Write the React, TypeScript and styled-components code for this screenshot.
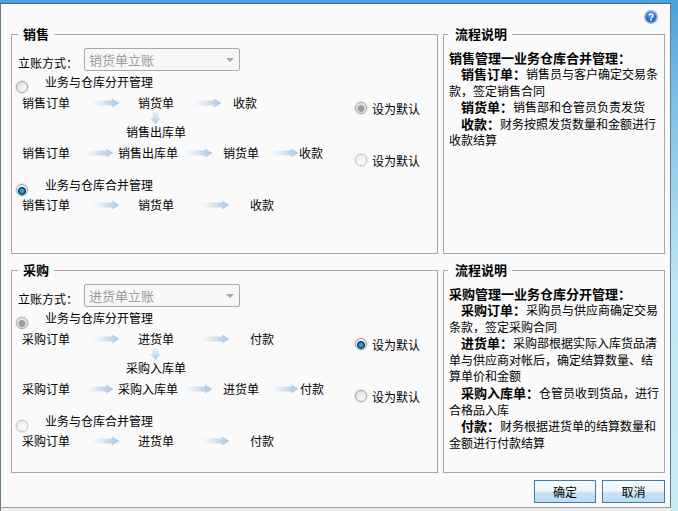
import React, { useId } from "react";
import styled, { createGlobalStyle } from "styled-components";

const COLON = "\uFF1A";
const COMMA = "\uFF0C";

const Global = createGlobalStyle`
  html, body { margin: 0; padding: 0; background: #fafafa; }
  body { font-family: "Noto Sans CJK SC", "Liberation Sans", sans-serif; font-size: 12px; color: #000; }
`;

const Window = styled.div`
  width: 678px;
  height: 511px;
  display: flex;
  overflow: hidden;
  background: linear-gradient(180deg, #4ba0d8 0%, #7fc0e6 20%, #bfe6f2 55%, #c9ecf3 100%);
`;

const ClientColumn = styled.div`
  width: 671px;
  display: flex;
  flex-direction: column;
  padding-top: 3px;
`;

const Client = styled.div`
  height: 505px;
  box-sizing: border-box;
  border-left: 1px solid #5f7d8a;
  border-right: 1px solid #5f7d8a;
  border-top: 1px solid #2f6c92;
  border-bottom: 1px solid #9a9a9a;
  background: #fafafa;
  padding: 6px 5px 0 10px;
  display: flex;
  flex-direction: column;
`;

const BottomStrip = styled.div`
  flex: 1;
  background: #ececec;
  border-left: 1px solid #5f7d8a;
`;

const HelpBar = styled.div`
  height: 17px;
  display: flex;
  justify-content: flex-end;
  padding-right: 7px;
`;

const Sections = styled.div`
  display: grid;
  grid-template-columns: 427px 222px;
  grid-template-rows: 227px 210px;
  column-gap: 5px;
  row-gap: 9px;
`;

const Box = styled.fieldset`
  margin: 0;
  padding: 0 0 0 6px;
  min-width: 0;
  border: 1px solid #a9a9a9;
  box-sizing: border-box;
`;

const BoxTitle = styled.legend`
  margin-left: 0;
  padding: 0 5px;
  font-size: 13px;
  font-weight: 700;
  line-height: 14px;
`;

const DescBox = styled(Box)`
  padding: 8.5px 0 0 5px;
`;

const DescTitle = styled(BoxTitle)`
  margin-left: -1px;
  padding: 0 5px 0 7px;
`;

const SectionBody = styled.div`
  display: grid;
  grid-template-columns: 337px 1fr;
`;

const LeftCol = styled.div`
  display: flex;
  flex-direction: column;
`;

const RightCol = styled.div`
  display: flex;
  flex-direction: column;
  gap: 36px;
  padding-top: 59px;
`;

const AccountRow = styled.div`
  display: flex;
  align-items: center;
  height: 23px;
  margin-top: 7px;
`;

const AccountLabel = styled.span`
  width: 66px;
  padding-top: 7px;
  line-height: 16px;
  white-space: nowrap;
`;

const SelectBox = styled.div`
  width: 156px;
  height: 23px;
  box-sizing: border-box;
  border: 1px solid #a9a9a9;
  border-radius: 2px;
  background: #f7f7f7;
  color: #9a9a9a;
  padding: 0 5px 0 4px;
  display: flex;
  align-items: center;
  justify-content: space-between;
  line-height: 18px;
  font-size: 13px;
`;

const Caret = styled.span`
  width: 0;
  height: 0;
  border-left: 4px solid transparent;
  border-right: 4px solid transparent;
  border-top: 4px solid #a5a5a5;
`;

const ModeRow = styled.div<{ $mt?: number }>`
  height: 16px;
  margin-top: ${(p) => p.$mt ?? 3}px;
  position: relative;
  padding-left: 27px;
  line-height: 16px;
  white-space: nowrap;
`;

const ModeRadio = styled.span`
  position: absolute;
  left: -2px;
  top: 7px;
  line-height: 0;
`;

const Flow = styled.div<{ $cols: string; $mt?: number }>`
  display: grid;
  grid-template-columns: ${(p) => p.$cols};
  align-items: center;
  height: 16px;
  margin-top: ${(p) => p.$mt ?? 5}px;
  padding-left: 4px;
  line-height: 16px;
  white-space: nowrap;
`;

const DownBlock = styled.div`
  display: flex;
  flex-direction: column;
  align-items: flex-start;
  height: 29px;
  padding: 1px 0 0 108px;
  box-sizing: border-box;
`;

const DownSlot = styled.div`
  height: 12px;
  margin-left: 24px;
`;

const DownLabel = styled.div`
  line-height: 16px;
`;

const DefaultRow = styled.div`
  display: flex;
  align-items: center;
  gap: 5px;
  height: 16px;
  white-space: nowrap;
`;

const Desc = styled.div`
  line-height: 16.6px;
  white-space: nowrap;
`;

const DescHead = styled.div`
  font-weight: 700;
  font-size: 13px;
`;

const Item = styled.div`
  text-indent: 12px;
`;

const Strong = styled.b`
  font-weight: 700;
  font-size: 13px;
`;

const Footer = styled.div`
  display: flex;
  justify-content: flex-end;
  gap: 6px;
  margin-top: 7px;
`;

const Btn = styled.button<{ $w: number }>`
  width: ${(p) => p.$w}px;
  height: 23px;
  box-sizing: border-box;
  border: 1px solid #3b7ea6;
  background: linear-gradient(180deg, #fbfdfe 0%, #eaf4fa 48%, #c6e3f6 56%, #bcdcf3 100%);
  font: inherit;
  color: #000;
  padding: 0;
`;

const RadioDot = styled.span<{ $on?: boolean; $disabled?: boolean }>`
  flex: none;
  display: inline-block;
  width: 12px;
  height: 12px;
  border-radius: 50%;
  box-sizing: border-box;
  border: 1px solid ${(p) => (p.$disabled && !p.$on ? "#c9c9c9" : "#a5a5a5")};
  box-shadow: 0 0 0 1px #e6e6e6;
  background: ${(p) =>
    p.$on
      ? p.$disabled
        ? "radial-gradient(circle at 50% 55%, #9c9c9c 0 3px, #c8c8c8 3.5px, #f0f0f0 4.5px, #e4e4e4 100%)"
        : "radial-gradient(circle at 50% 60%, #2aa7dc 0 1.5px, #0a4f8c 3px, #0c3a66 3.6px, #f3f3f3 4.4px, #dcdcdc 100%)"
      : p.$disabled
        ? "linear-gradient(145deg, #e9e9e9 0%, #f7f7f7 55%, #fdfdfd 100%)"
        : "linear-gradient(145deg, #d8d8d8 0%, #f0f0f0 55%, #fdfdfd 100%)"};
`;

const Arrow: React.FC = () => {
  const id = useId();
  return (
    <svg width="27" height="10" viewBox="0 0 27 10" style={{ display: "block" }}>
      <defs>
        <linearGradient id={id} x1="0" x2="1" y1="0" y2="0">
          <stop offset="0" stopColor="#dde8f3" stopOpacity="0.15" />
          <stop offset="0.6" stopColor="#c4d9ee" />
          <stop offset="1" stopColor="#a9c8e6" />
        </linearGradient>
      </defs>
      <path d="M0 2.6H19V0.5L26.5 5L19 9.5V7.4H0Z" fill={`url(#${id})`} />
    </svg>
  );
};

const DownArrow: React.FC = () => {
  const id = useId();
  return (
    <svg width="11" height="12" viewBox="0 0 11 12" style={{ display: "block" }}>
      <defs>
        <linearGradient id={id} x1="0" x2="0" y1="0" y2="1">
          <stop offset="0" stopColor="#d6e5f3" stopOpacity="0.5" />
          <stop offset="1" stopColor="#a9c8e6" />
        </linearGradient>
      </defs>
      <path d="M2.5 0H8.5V6H11L5.5 12L0 6H2.5Z" fill={`url(#${id})`} />
    </svg>
  );
};

const HelpIcon: React.FC = () => {
  const id = useId();
  return (
    <svg width="14" height="14" viewBox="0 0 15 15" style={{ display: "block" }}>
      <defs>
        <radialGradient id={id} cx="0.5" cy="0.3" r="0.8">
          <stop offset="0" stopColor="#5b9ff0" />
          <stop offset="1" stopColor="#1749b8" />
        </radialGradient>
      </defs>
      <circle cx="7.5" cy="7.5" r="7.4" fill="#8eb8e8" />
      <circle cx="7.5" cy="7.5" r="5.8" fill={`url(#${id})`} />
      <path d="M5.4 5.8C5.6 3.9 9.6 3.8 9.6 6C9.6 7.5 7.6 7.4 7.5 9" fill="none" stroke="#fff" strokeWidth="1.5" />
      <rect x="6.7" y="9.8" width="1.7" height="1.7" fill="#fff" />
    </svg>
  );
};

type Mode = { on: boolean; disabled: boolean };

const Section: React.FC<{
  title: string;
  account: string;
  order: string;
  bill: string;
  warehouse: string;
  pay: string;
  firstCols: string;
  longCols: string;
  separate: Mode;
  merged: Mode;
  defaults: [Mode, Mode];
}> = ({ title, account, order, bill, warehouse, pay, firstCols, longCols, separate, merged, defaults }) => (
  <Box>
    <BoxTitle>{title}</BoxTitle>
    <SectionBody>
      <LeftCol>
        <AccountRow>
          <AccountLabel>立账方式{COLON}</AccountLabel>
          <SelectBox>
            {account}
            <Caret />
          </SelectBox>
        </AccountRow>
        <ModeRow>
          <ModeRadio><RadioDot $on={separate.on} $disabled={separate.disabled} /></ModeRadio>
          业务与仓库分开管理
        </ModeRow>
        <Flow $cols={firstCols}>
          <span>{order}</span>
          <Arrow />
          <span>{bill}</span>
          <Arrow />
          <span>{pay}</span>
        </Flow>
        <DownBlock>
          <DownSlot><DownArrow /></DownSlot>
          <DownLabel>{warehouse}</DownLabel>
        </DownBlock>
        <Flow $cols={longCols}>
          <span>{order}</span>
          <Arrow />
          <span>{warehouse}</span>
          <Arrow />
          <span>{bill}</span>
          <Arrow />
          <span>{pay}</span>
        </Flow>
        <ModeRow $mt={16}>
          <ModeRadio><RadioDot $on={merged.on} $disabled={merged.disabled} /></ModeRadio>
          业务与仓库合并管理
        </ModeRow>
        <Flow $cols="71px 45px 65px 47px 1fr" $mt={4}>
          <span>{order}</span>
          <Arrow />
          <span>{bill}</span>
          <Arrow />
          <span>{pay}</span>
        </Flow>
      </LeftCol>
      <RightCol>
        <DefaultRow><RadioDot $on={defaults[0].on} $disabled={defaults[0].disabled} />设为默认</DefaultRow>
        <DefaultRow><RadioDot $on={defaults[1].on} $disabled={defaults[1].disabled} />设为默认</DefaultRow>
      </RightCol>
    </SectionBody>
  </Box>
);

export default function App() {
  return (
    <>
      <Global />
      <Window>
        <ClientColumn>
          <Client>
            <HelpBar><HelpIcon /></HelpBar>
            <Sections>
              <Section
                title="销售"
                account="销货单立账"
                order="销售订单"
                bill="销货单"
                warehouse="销售出库单"
                pay="收款"
                firstCols="71px 45px 57px 38px 1fr"
                longCols="65px 31px 68px 37px 49px 27px 1fr"
                separate={{ on: false, disabled: false }}
                merged={{ on: true, disabled: false }}
                defaults={[{ on: true, disabled: true }, { on: false, disabled: true }]}
              />
              <DescBox>
                <DescTitle>流程说明</DescTitle>
                <Desc>
                  <DescHead>销售管理一业务仓库合并管理{COLON}</DescHead>
                  <Item><Strong>销售订单{COLON}</Strong>销售员与客户确定交易条<br />款{COMMA}签定销售合同</Item>
                  <Item><Strong>销货单{COLON}</Strong>销售部和仓管员负责发货</Item>
                  <Item><Strong>收款{COLON}</Strong>财务按照发货数量和金额进行<br />收款结算</Item>
                </Desc>
              </DescBox>
              <Section
                title="采购"
                account="进货单立账"
                order="采购订单"
                bill="进货单"
                warehouse="采购入库单"
                pay="付款"
                firstCols="71px 45px 65px 47px 1fr"
                longCols="65px 31px 68px 37px 49px 28px 1fr"
                separate={{ on: true, disabled: true }}
                merged={{ on: false, disabled: true }}
                defaults={[{ on: true, disabled: false }, { on: false, disabled: false }]}
              />
              <DescBox>
                <DescTitle>流程说明</DescTitle>
                <Desc>
                  <DescHead>采购管理一业务仓库分开管理{COLON}</DescHead>
                  <Item><Strong>采购订单{COLON}</Strong>采购员与供应商确定交易<br />条款{COMMA}签定采购合同</Item>
                  <Item><Strong>进货单{COLON}</Strong>采购部根据实际入库货品清<br />单与供应商对帐后{COMMA}确定结算数量、结<br />算单价和金额</Item>
                  <Item><Strong>采购入库单{COLON}</Strong>仓管员收到货品{COMMA}进行<br />合格品入库</Item>
                  <Item><Strong>付款{COLON}</Strong>财务根据进货单的结算数量和<br />金额进行付款结算</Item>
                </Desc>
              </DescBox>
            </Sections>
            <Footer>
              <Btn $w={62}>确定</Btn>
              <Btn $w={63}>取消</Btn>
            </Footer>
          </Client>
          <BottomStrip />
        </ClientColumn>
      </Window>
    </>
  );
}
